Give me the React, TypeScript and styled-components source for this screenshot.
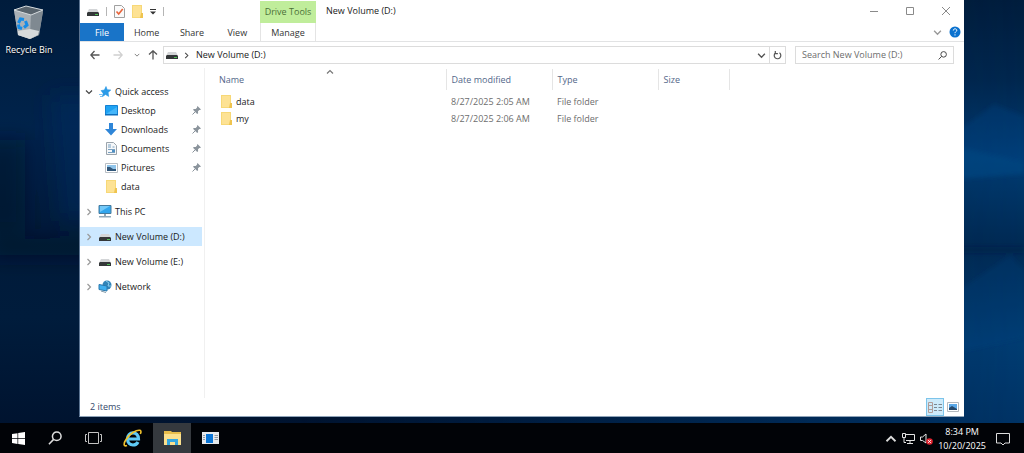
import { useState } from 'react';
import styled, { createGlobalStyle } from 'styled-components';

const GlobalStyle = createGlobalStyle`
  * {
    box-sizing: border-box;
  }
  body {
    margin: 0;
    background: #001a3a;
    font-family: 'Open Sans', 'Noto Sans', sans-serif;
    font-size: 9px;
    line-height: 12px;
    color: #1a1a1a;
  }
  button, input {
    font: inherit;
    color: inherit;
    border: 0;
    padding: 0;
    margin: 0;
    background: none;
  }
  svg {
    display: block;
    flex: none;
  }
`;

/* ---------- desktop ---------- */

const Desktop = styled.div`
  position: relative;
  min-height: 100vh;
  display: flex;
  flex-direction: column;
`;

const WallpaperSvg = styled.svg`
  position: absolute;
  inset: 0;
  width: 100%;
  height: 100%;
`;

const Workspace = styled.main`
  position: relative;
  flex: 1;
  display: flex;
  padding: 0 60px 6px 0;
`;

const Shortcuts = styled.div`
  width: 79px;
  padding: 5px 0 0 4px;
`;

const Shortcut = styled.button`
  display: flex;
  flex-direction: column;
  align-items: center;
  gap: 3px;
  width: 50px;
  color: #fff;
  white-space: nowrap;
  text-shadow: 0 1px 2px #000;
`;

/* ---------- window ---------- */

const Window = styled.section`
  flex: 1;
  min-width: 0;
  display: flex;
  flex-direction: column;
  background: #fff;
  border-left: 1px solid #5a7391;
  border-bottom: 1px solid #8fa3b8;
`;

const Ribbon = styled.header`
  display: grid;
  grid-template-columns: 180px 56px 1fr;
  grid-template-rows: 23px 18px;
  border-bottom: 1px solid #e2e3e4;
`;

const QuickBar = styled.div`
  display: flex;
  align-items: center;
  gap: 7px;
  padding-left: 7px;
`;

const IconButton = styled.button`
  display: flex;
  align-items: center;
  justify-content: center;
`;

const Divider = styled.span`
  width: 1px;
  height: 9px;
  background: #b5b5b5;
`;

const ToolGroup = styled.div`
  margin-top: 1px;
  background: #c0ed9b;
  color: #4c7038;
  display: flex;
  align-items: center;
  justify-content: center;
  white-space: nowrap;
`;

const TitleBar = styled.div`
  display: flex;
  align-items: center;
  justify-content: space-between;
  padding: 0 13px 2px 10px;
`;

const Title = styled.h1`
  margin: 0;
  font-size: 9px;
  font-weight: 400;
`;

const WindowButtons = styled.div`
  display: flex;
  gap: 26px;
  color: #8a8a8a;
`;

const Tabs = styled.nav`
  display: flex;
`;

const Tab = styled.button<{ $kind?: 'file' | 'context' }>`
  flex: ${p => (p.$kind === 'file' ? '0 0 44px' : '1')};
  padding-top: 1px;
  color: ${p => (p.$kind === 'file' ? '#fff' : '#333')};
  background: ${p => (p.$kind === 'file' ? '#1974c8' : 'none')};
  ${p => p.$kind === 'context' && 'border: solid #e4e4e4; border-width: 0 1px;'}
`;

const RibbonEnd = styled.div`
  display: flex;
  align-items: center;
  justify-content: flex-end;
  gap: 7px;
  padding-right: 3px;
`;

const AddressRow = styled.div`
  display: flex;
  align-items: center;
  padding: 4px 10px 4px 0;
`;

const NavButtons = styled.div`
  display: flex;
  align-items: center;
  width: 83px;
  padding-left: 10px;
  gap: 11px;
`;

const NavGroup = styled.div<{ $gap: number }>`
  display: flex;
  align-items: center;
  gap: ${p => p.$gap}px;
`;

const Field = styled.div`
  display: flex;
  align-items: center;
  height: 18px;
  border: 1px solid #dcdcdc;
`;

const AddressField = styled(Field)`
  flex: 1;
  gap: 5px;
  padding-left: 2px;
`;

const Crumb = styled.button`
  margin-left: 1px;
`;

const AddressEnd = styled.div`
  display: flex;
  align-items: center;
  margin-left: auto;
  gap: 3px;
`;

const Refresh = styled(IconButton)`
  width: 16px;
  height: 16px;
  border-left: 1px solid #dcdcdc;
`;

const SearchField = styled(Field)`
  width: 159px;
  margin-left: 9px;
  padding: 0 6px;
`;

const SearchInput = styled.input`
  flex: 1;
  min-width: 0;
  outline: none;
  &::placeholder {
    color: #6d6d6d;
    opacity: 1;
  }
`;

const Body = styled.div`
  flex: 1;
  display: flex;
`;

/* ---------- navigation pane ---------- */

const Sidebar = styled.aside`
  width: 125px;
  padding: 14px 2px 0 0;
  border-right: 1px solid #f0f0f0;
`;

const TreeGroup = styled.div`
  margin-bottom: 6px;
`;

const TreeRow = styled.button<{ $selected?: boolean; $child?: boolean }>`
  display: flex;
  align-items: center;
  width: 100%;
  height: 19px;
  padding: 0 1px 0 ${p => (p.$child ? '24px' : '5px')};
  text-align: left;
  background: ${p => (p.$selected ? '#cce8ff' : 'none')};
  &:hover {
    background: ${p => (p.$selected ? '#cce8ff' : '#e5f3ff')};
  }
`;

const TreeIcon = styled.span`
  display: flex;
  justify-content: center;
  width: 14px;
  margin-right: 3px;
`;

const Twisty = styled.span`
  width: 13px;
`;

const TreeLabel = styled.span`
  flex: 1;
  white-space: nowrap;
`;

/* ---------- file list ---------- */

const Files = styled.div`
  flex: 1;
  min-width: 0;
  padding: 1px 0 0 9px;
`;

const FileTable = styled.table`
  table-layout: fixed;
  width: 515px;
  border-collapse: collapse;
`;

const HeadCell = styled.th<{ $width: number }>`
  position: relative;
  width: ${p => p.$width}px;
  height: 21px;
  padding: 1px 5px 0;
  border-right: 1px solid #e5e5e5;
  font-weight: 400;
  text-align: left;
  color: #53678a;
`;

const SortMark = styled.span`
  position: absolute;
  top: -1px;
  left: 50%;
  transform: translateX(-50%);
`;

const Cell = styled.td`
  height: 17px;
  padding: 0 5px;
  color: #6d6d6d;
`;

const FileName = styled.button`
  display: flex;
  align-items: center;
  gap: 4px;
  padding-left: 2px;
  color: #1a1a1a;
`;

const FileRows = styled.tbody`
  &::before {
    content: '';
    display: block;
    height: 3px;
  }
`;

const StatusBar = styled.footer`
  display: flex;
  align-items: center;
  justify-content: space-between;
  height: 18px;
  padding: 0 2px 0 10px;
  color: #33486b;
`;

const Views = styled.div`
  display: flex;
`;

const ViewButton = styled(IconButton)<{ $active?: boolean }>`
  width: 18px;
  height: 18px;
  border: 1px solid ${p => (p.$active ? '#7cc4ea' : 'transparent')};
  background: ${p => (p.$active ? '#cdeafa' : 'none')};
`;

/* ---------- taskbar ---------- */

const Taskbar = styled.footer`
  position: relative;
  display: flex;
  height: 30px;
  background: #010307;
  color: #fff;
`;

const TaskButton = styled(IconButton)<{ $active?: boolean; $width?: number }>`
  width: ${p => p.$width ?? 38}px;
  background: ${p => (p.$active ? '#35393e' : 'none')};
`;

const Tray = styled.div`
  display: flex;
  align-items: center;
  gap: 5px;
  margin-left: auto;
  padding: 2px 14px 0 0;
`;

const Clock = styled.time`
  text-align: center;
  line-height: 14px;
  white-space: nowrap;
`;

const ActionCenter = styled(IconButton)`
  margin-left: 5px;
`;

/* ---------- icons ---------- */

const DriveIcon = () => (
  <svg width="12" height="10" viewBox="0 0 12 10">
    <path d="M2 2h8l2 4H0z" fill="#d3d5d7" />
    <path d="M1 5h10l1 1v3H0V6z" fill="#343739" />
    <path d="M8 7h3v1H8z" fill="#4fbf55" />
  </svg>
);

const FolderIcon = () => (
  <svg width="11" height="13" viewBox="0 0 11 13">
    <path d="M0 0h10v13H0z" fill="#f7d877" />
    <path d="M1 1h8v11H1z" fill="#fde294" />
    <path d="M9 8h2v5H8z" fill="#efc44f" />
  </svg>
);

const CheckDocIcon = () => (
  <svg width="11" height="13" viewBox="0 0 11 13">
    <path d="M.5.5h7l3 3v9H.5z" fill="#fafafa" stroke="#a0a0a0" />
    <path d="M2.500 6.500l2.200 2.500 4-5" fill="none" stroke="#e8643a" strokeWidth="1.600" />
  </svg>
);

const Chevron = ({ dir, size = 8, color = '#777' }: { dir: 'up' | 'down' | 'right'; size?: number; color?: string }) => {
  const d = { up: 'M1 5.500l3-3 3 3', down: 'M1 2.500l3 3 3-3', right: 'M2.500 1l3 3-3 3' }[dir];
  return (
    <svg width={size} height={size} viewBox="0 0 8 8" fill="none" stroke={color} strokeWidth="1.200">
      <path d={d} />
    </svg>
  );
};

const Arrow = ({ turn = 0, color = '#555' }: { turn?: number; color?: string }) => (
  <svg width="10" height="10" viewBox="0 0 10 10" fill="none" stroke={color} strokeWidth="1.300">
    <path d="M9.500 5H1M4.500 1L.800 5l3.700 4" transform={`rotate(${turn} 5 5)`} />
  </svg>
);

const StarIcon = () => (
  <svg width="12" height="12" viewBox="0 0 12 12">
    <path d="M7 .5l1.200 3.200 3.600.3-2.700 2.500.6 3.900-3.200-1.900-3.200 2.200.8-3.400L2 4.600l3.400-.6z" fill="#2b9be8" stroke="#2b9be8" strokeWidth=".6" />
    <path d="M0 8.500h3M1 10.500h2" stroke="#7cc3f2" />
  </svg>
);

const DesktopIcon = () => (
  <svg width="13" height="11" viewBox="0 0 13 11">
    <path d="M.5.5h12v9H.5z" fill="#1fa3f3" stroke="#1481d3" />
    <path d="M1 9L12 2v7z" fill="#45b6fa" />
    <path d="M0 9h13v1.500H0z" fill="#0e6fbd" />
  </svg>
);

const DownloadIcon = () => (
  <svg width="12" height="13" viewBox="0 0 12 13">
    <path d="M4 0h4v6h4l-6 6.500L0 6h4z" fill="#2f86d8" />
  </svg>
);

const DocumentIcon = () => (
  <svg width="11" height="13" viewBox="0 0 11 13">
    <path d="M.5.5h7l3 3v9H.5z" fill="#f5f7f9" stroke="#9ba4ac" />
    <path d="M2 3h3M2 5h3M6.500 5h2M2 7.500h7M2 10.500h7" stroke="#79a0c0" />
    <path d="M6 8h3v2H6z" fill="#4f90c4" />
  </svg>
);

const PictureIcon = () => (
  <svg width="13" height="10" viewBox="0 0 13 10">
    <path d="M.5.5h12v9H.5z" fill="#fff" stroke="#b8bec4" />
    <path d="M2 2h9v6H2z" fill="#8fc4ea" />
    <path d="M2 4l3 0 3 2h3v2H2z" fill="#31577a" />
  </svg>
);

const PinIcon = () => (
  <svg width="9" height="9" viewBox="0 0 9 9">
    <path d="M5.500 0L9 3.500l-1 .5-.6-.1L6 5.300l.1 1.900-.9.8L1 3.800l.8-.9 1.900.1L5.100 1.600 5 1z" fill="#8b949c" />
    <path d="M3.200 5.800L.5 8.500" stroke="#8b949c" />
  </svg>
);

const PcIcon = () => (
  <svg width="14" height="13" viewBox="0 0 14 13">
    <path d="M1 .5h12v8H1z" fill="#32a6ee" stroke="#477a9c" />
    <path d="M2 1h10L2 7z" fill="#74c9f8" />
    <path d="M6 9h2v2H6z" fill="#96a7b3" />
    <path d="M1 11h12v1.500H1z" fill="#91a9ba" />
  </svg>
);

const NetworkIcon = () => (
  <svg width="14" height="13" viewBox="0 0 14 13">
    <circle cx="9" cy="5" r="4.500" fill="#3184b8" />
    <path d="M8 1l3 2-1 3 3 0" fill="none" stroke="#8accec" />
    <path d="M1 4.500l8 1.500v5l-8-1.500z" fill="#41b0ef" stroke="#2a78ad" />
    <path d="M3 11l5 1.500" stroke="#8199a8" />
  </svg>
);

const SearchIcon = ({ size, color }: { size: number; color: string }) => (
  <svg width={size} height={size} viewBox="0 0 12 12" fill="none" stroke={color} strokeWidth="1.300">
    <circle cx="7.500" cy="4.500" r="3.700" />
    <path d="M4.800 7.200L.8 11.300" />
  </svg>
);

const RecycleBinIcon = () => (
  <svg width="32" height="36" viewBox="0 0 32 36">
    <path d="M1 5l4 25 12 4 9-4 4-24-12-4z" fill="#9ba3aa" />
    <path d="M1 5l17 4-1 25-12-4z" fill="#a9b0b6" />
    <path d="M18 9l12-3-4 24-9 4z" fill="#7f8991" />
    <path d="M1 5l12-4 17 4-12 5z" fill="#59646d" stroke="#d5dadd" />
    <path d="M5 26l12-2 9 2-1 4-8 4-12-4z" fill="#d7dadb" />
    <g fill="none" stroke="#158ce8" strokeWidth="3">
      <path d="M5.500 18l2-4 3.500.5M12.500 16l1.500 4-3 2.500M9 23.500L6 22.500l-.5-3" />
    </g>
  </svg>
);

const WindowsIcon = () => (
  <svg width="13" height="13" viewBox="0 0 13 13" fill="#fff">
    <path d="M0 2l5.500-.8v5H0zM6.200 1.100L13 0v6.200H6.200zM0 6.900h5.500v5L0 11.100zM6.200 6.900H13V13l-6.800-1z" />
  </svg>
);

const TaskViewIcon = () => (
  <svg width="17" height="12" viewBox="0 0 17 12" fill="none" stroke="#c4c4c4">
    <path d="M3.500.5h10v11h-10zM2 2.500H.5v7H2M15 2.500h1.500v7H15" />
  </svg>
);

const InternetExplorerIcon = () => (
  <svg width="19" height="18" viewBox="0 0 19 18" fill="none">
    <path d="M4.500 10H15.500C15.500 6 13 3.800 10 3.800S4.500 6.300 4.500 10s2.500 6 5.500 6c2.300 0 4-1 5-3" stroke="#5fcaf5" strokeWidth="3.200" />
    <path d="M4 16.500C.5 18 .3 14.500 3 10.500 6.500 5 13.500.5 17 1.300c1.300.4 1.200 2 .3 3.700" stroke="#f1c22d" strokeWidth="1.600" />
  </svg>
);

const FileExplorerIcon = () => (
  <svg width="17" height="14" viewBox="0 0 17 14">
    <path d="M0 0h7l1 1h9v3H0z" fill="#e8bd4b" />
    <path d="M0 3h17v11H0z" fill="#fbe08d" />
    <path d="M3 8h11v6h-3v-3H6v3H3z" fill="#35a7e0" />
  </svg>
);

const ServerIcon = () => (
  <svg width="17" height="12" viewBox="0 0 17 12">
    <path d="M0 0h17v12H0z" fill="#e6e9ec" />
    <path d="M4 2h7v9H4z" fill="#0b75d5" />
    <path d="M1 3.500h2M1 5.500h2M1 7.500h2M12.500 3.500H16M12.500 5.500H16M12.500 7.500H16" stroke="#9099a1" />
  </svg>
);

const TrayNetworkIcon = () => (
  <svg width="13" height="12" viewBox="0 0 13 12" fill="none" stroke="#e4e4e4">
    <path d="M4 1.500h8.500v6H4M8 8v2.500M5 10.500h6M.5.500h3v4h-3zM2 4.500v5h2" />
  </svg>
);

const VolumeIcon = () => (
  <svg width="13" height="12" viewBox="0 0 13 12">
    <path d="M.5 4h2L6 1v9L2.500 7.500h-2z" fill="none" stroke="#e4e4e4" />
    <circle cx="9.500" cy="8.500" r="3.300" fill="#e02430" />
    <path d="M8.200 7.200l2.600 2.600M10.800 7.200L8.200 9.800" stroke="#fff" />
  </svg>
);

const Wallpaper = () => (
  <WallpaperSvg viewBox="0 0 1024 453" preserveAspectRatio="none" aria-hidden="true">
    <defs>
      <linearGradient id="night" x1="0" y1="0" x2="0" y2="1">
        <stop offset="0" stopColor="#001c3c" />
        <stop offset=".28" stopColor="#00234b" />
        <stop offset=".5" stopColor="#001a39" />
        <stop offset=".7" stopColor="#001c3c" />
        <stop offset="1" stopColor="#00112c" />
      </linearGradient>
      <linearGradient id="glow" x1="0" y1="0" x2="0" y2="1">
        <stop offset="0" stopColor="#001d3d" />
        <stop offset=".18" stopColor="#00274f" />
        <stop offset=".35" stopColor="#003c73" />
        <stop offset=".54" stopColor="#002a54" />
        <stop offset=".76" stopColor="#003c72" />
        <stop offset="1" stopColor="#003061" />
      </linearGradient>
      <linearGradient id="fade" x1="0" y1="0" x2="1" y2="0">
        <stop offset="0" stopColor="#fff" stopOpacity="0" />
        <stop offset="1" stopColor="#fff" />
      </linearGradient>
      <mask id="right">
        <rect x="300" width="724" height="453" fill="url(#fade)" />
      </mask>
      <filter id="soft">
        <feGaussianBlur stdDeviation="2" />
      </filter>
      <filter id="haze" x="-50%" y="-50%" width="200%" height="200%">
        <feGaussianBlur stdDeviation="10" />
      </filter>
    </defs>
    <rect width="1024" height="453" fill="url(#night)" />
    <rect width="1024" height="453" fill="url(#glow)" mask="url(#right)" />
    <g filter="url(#haze)">
      <path d="M50 95h60v125H60z" fill="#002c60" opacity=".5" />
      <path d="M-20 140h45v90h-45z" fill="#000f28" opacity=".5" />
      <path d="M-10 238h110v18H-10z" fill="#000d24" opacity=".6" />
    </g>
    <g filter="url(#soft)">
      <path d="M960 130l34-26 30 12v46l-64-15z" fill="#00488a" opacity=".25" />
      <path d="M960 147l64 15v12l-64 5z" fill="#00498a" opacity=".5" />
      <path d="M960 247h64v6h-64z" fill="#001e40" opacity=".4" />
      <path d="M960 290l50-35 14 15v68l-64 14z" fill="#004788" opacity=".2" />
    </g>
  </WallpaperSvg>
);

/* ---------- data ---------- */

const pinned = [
  { name: 'Desktop', icon: <DesktopIcon />, pin: true },
  { name: 'Downloads', icon: <DownloadIcon />, pin: true },
  { name: 'Documents', icon: <DocumentIcon />, pin: true },
  { name: 'Pictures', icon: <PictureIcon />, pin: true },
  { name: 'data', icon: <FolderIcon />, pin: false },
];

const places = [
  { name: 'This PC', icon: <PcIcon /> },
  { name: 'New Volume (D:)', icon: <DriveIcon /> },
  { name: 'New Volume (E:)', icon: <DriveIcon /> },
  { name: 'Network', icon: <NetworkIcon /> },
];

const columns = [
  { name: 'Name', width: 232 },
  { name: 'Date modified', width: 106 },
  { name: 'Type', width: 106 },
  { name: 'Size', width: 71 },
];

const files = [
  { name: 'data', modified: '8/27/2025 2:05 AM', type: 'File folder' },
  { name: 'my', modified: '8/27/2025 2:06 AM', type: 'File folder' },
];

const tasks = [
  { name: 'Start', icon: <WindowsIcon />, width: 36 },
  { name: 'Search', icon: <SearchIcon size={14} color="#ddd" /> },
  { name: 'Task View', icon: <TaskViewIcon /> },
  { name: 'Internet Explorer', icon: <InternetExplorerIcon />, width: 41 },
  { name: 'File Explorer', icon: <FileExplorerIcon />, active: true },
  { name: 'Server Manager', icon: <ServerIcon /> },
];

export default function App() {
  const [selected, setSelected] = useState('New Volume (D:)');
  const [query, setQuery] = useState('');

  return (
    <Desktop>
      <GlobalStyle />
      <Wallpaper />
      <Workspace>
        <Shortcuts>
          <Shortcut>
            <RecycleBinIcon />
            Recycle Bin
          </Shortcut>
        </Shortcuts>
        <Window>
          <Ribbon>
            <QuickBar>
              <DriveIcon />
              <Divider />
              <IconButton aria-label="Properties"><CheckDocIcon /></IconButton>
              <IconButton aria-label="New folder"><FolderIcon /></IconButton>
              <IconButton aria-label="Customize toolbar">
                <svg width="6" height="6" viewBox="0 0 6 6" fill="#333">
                  <path d="M0 0h6v1H0zM0 2.500h6L3 5.500z" />
                </svg>
              </IconButton>
              <Divider />
            </QuickBar>
            <ToolGroup>Drive Tools</ToolGroup>
            <TitleBar>
              <Title>New Volume (D:)</Title>
              <WindowButtons>
                <IconButton aria-label="Minimize">
                  <svg width="10" height="10" viewBox="0 0 10 10" stroke="currentColor"><path d="M1 5.500h8" /></svg>
                </IconButton>
                <IconButton aria-label="Maximize">
                  <svg width="10" height="10" viewBox="0 0 10 10" fill="none" stroke="currentColor"><path d="M1.500 1.500h7v7h-7z" /></svg>
                </IconButton>
                <IconButton aria-label="Close">
                  <svg width="10" height="10" viewBox="0 0 10 10" stroke="currentColor"><path d="M1 1l8 8M9 1L1 9" /></svg>
                </IconButton>
              </WindowButtons>
            </TitleBar>
            <Tabs>
              <Tab $kind="file">File</Tab>
              <Tab>Home</Tab>
              <Tab>Share</Tab>
              <Tab>View</Tab>
            </Tabs>
            <Tab $kind="context">Manage</Tab>
            <RibbonEnd>
              <IconButton aria-label="Expand the ribbon"><Chevron dir="down" size={9} color="#999" /></IconButton>
              <IconButton aria-label="Help">
                <svg width="12" height="12" viewBox="0 0 12 12">
                  <circle cx="6" cy="6" r="5.500" fill="#0b72cf" />
                  <path d="M4.300 4.500c0-2.300 3.500-2.200 3.500-.2C7.800 5.600 6 5.600 6 7.200M6 8.300v1.200" fill="none" stroke="#fff" />
                </svg>
              </IconButton>
            </RibbonEnd>
          </Ribbon>

          <AddressRow>
            <NavButtons>
              <NavGroup $gap={13}>
                <IconButton aria-label="Back"><Arrow /></IconButton>
                <IconButton aria-label="Forward"><Arrow turn={180} color="#d0d0d0" /></IconButton>
              </NavGroup>
              <NavGroup $gap={8}>
                <IconButton aria-label="Recent locations"><Chevron dir="down" size={6} /></IconButton>
                <IconButton aria-label="Up"><Arrow turn={90} /></IconButton>
              </NavGroup>
            </NavButtons>
            <AddressField>
              <DriveIcon />
              <Chevron dir="right" size={7} color="#444" />
              <Crumb>New Volume (D:)</Crumb>
              <AddressEnd>
                <IconButton aria-label="Previous locations"><Chevron dir="down" size={9} color="#555" /></IconButton>
                <Refresh aria-label="Refresh">
                  <svg width="9" height="9" viewBox="0 0 9 9" fill="none" stroke="#555" strokeWidth="1.200">
                    <path d="M6.500 1.800A3.300 3.300 0 1 1 2.300 2M2.300 0v2.600h2.600" />
                  </svg>
                </Refresh>
              </AddressEnd>
            </AddressField>
            <SearchField>
              <SearchInput
                aria-label="Search New Volume (D:)"
                placeholder="Search New Volume (D:)"
                value={query}
                onChange={e => setQuery(e.target.value)}
              />
              <SearchIcon size={9} color="#444" />
            </SearchField>
          </AddressRow>

          <Body>
            <Sidebar>
              <TreeGroup>
                <TreeRow>
                  <Twisty><Chevron dir="down" size={8} color="#444" /></Twisty>
                  <TreeIcon><StarIcon /></TreeIcon>
                  <TreeLabel>Quick access</TreeLabel>
                </TreeRow>
                {pinned.map(item => (
                  <TreeRow key={item.name} $child>
                    <TreeIcon>{item.icon}</TreeIcon>
                    <TreeLabel>{item.name}</TreeLabel>
                    {item.pin && <PinIcon />}
                  </TreeRow>
                ))}
              </TreeGroup>
              {places.map(item => (
                <TreeGroup key={item.name}>
                  <TreeRow $selected={item.name === selected} onClick={() => setSelected(item.name)}>
                    <Twisty><Chevron dir="right" size={8} color="#999" /></Twisty>
                    <TreeIcon>{item.icon}</TreeIcon>
                    <TreeLabel>{item.name}</TreeLabel>
                  </TreeRow>
                </TreeGroup>
              ))}
            </Sidebar>
            <Files>
              <FileTable>
                <thead>
                  <tr>
                    {columns.map((col, i) => (
                      <HeadCell key={col.name} $width={col.width}>
                        {i === 0 && <SortMark><Chevron dir="up" size={8} /></SortMark>}
                        {col.name}
                      </HeadCell>
                    ))}
                  </tr>
                </thead>
                <FileRows>
                  {files.map(file => (
                    <tr key={file.name}>
                      <Cell><FileName><FolderIcon />{file.name}</FileName></Cell>
                      <Cell>{file.modified}</Cell>
                      <Cell>{file.type}</Cell>
                      <Cell />
                    </tr>
                  ))}
                </FileRows>
              </FileTable>
            </Files>
          </Body>

          <StatusBar>
            2 items
            <Views>
              <ViewButton $active aria-label="Details">
                <svg width="14" height="11" viewBox="0 0 14 11" fill="none" stroke="#7c8791">
                  <path d="M.5.500h4v10h-4zM.5 3.500h4M.5 7.500h4" stroke="#b09c98" />
                  <path d="M6 2.500h3M10.500 2.500H14M6 5.500h3M10.500 5.500H14M6 8.500h3M10.500 8.500H14" />
                </svg>
              </ViewButton>
              <ViewButton aria-label="Large icons">
                <svg width="12" height="10" viewBox="0 0 12 10">
                  <path d="M.5.500h11v9H.5z" fill="#fff" stroke="#b4b9be" />
                  <path d="M2 2h8v6H2z" fill="#5aa8e8" />
                  <path d="M2 6l3-2 5 3v1H2z" fill="#27486a" />
                </svg>
              </ViewButton>
            </Views>
          </StatusBar>
        </Window>
      </Workspace>

      <Taskbar>
        {tasks.map(task => (
          <TaskButton key={task.name} $active={task.active} $width={task.width} aria-label={task.name}>
            {task.icon}
          </TaskButton>
        ))}
        <Tray>
          <IconButton aria-label="Show hidden icons"><Chevron dir="up" size={12} color="#ddd" /></IconButton>
          <IconButton aria-label="Network"><TrayNetworkIcon /></IconButton>
          <IconButton aria-label="Volume"><VolumeIcon /></IconButton>
          <Clock>
            8:34 PM
            <br />
            10/20/2025
          </Clock>
          <ActionCenter aria-label="Notifications">
            <svg width="14" height="13" viewBox="0 0 14 13" fill="none" stroke="#ddd">
              <path d="M.5.500h13v9.500H9l-2 2-2-2H.5z" />
            </svg>
          </ActionCenter>
        </Tray>
      </Taskbar>
    </Desktop>
  );
}
